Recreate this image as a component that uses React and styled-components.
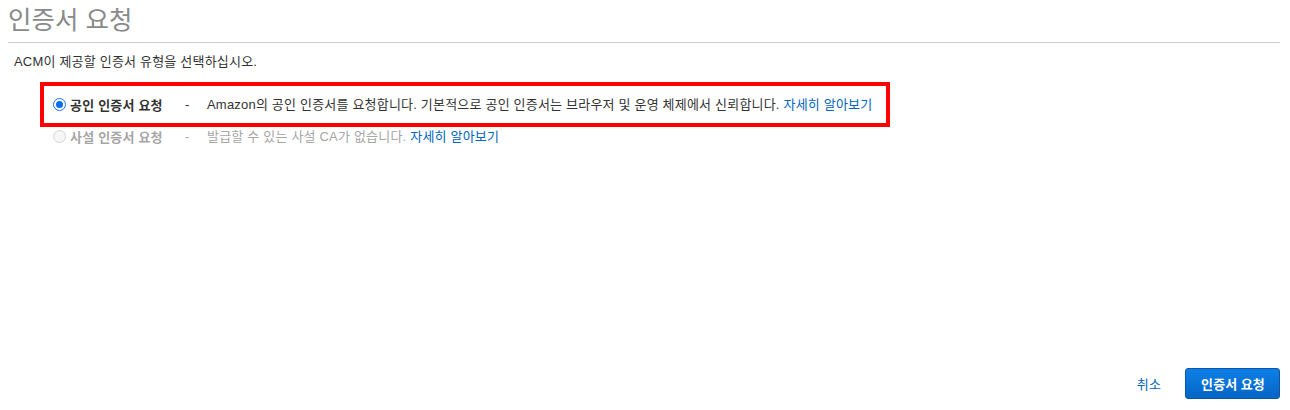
import React, { useState } from "react";
import styled, { createGlobalStyle } from "styled-components";

const GlobalStyle = createGlobalStyle`
  html, body {
    margin: 0;
    padding: 0;
    background: #fff;
  }
  body {
    font-family: "Liberation Sans", "Noto Sans CJK KR", sans-serif;
    color: #333;
  }
`;

const Page = styled.div`
  height: 410px;
  box-sizing: border-box;
  display: flex;
  flex-direction: column;
  padding: 0 10px 11px 8px;
`;

const Title = styled.h1`
  margin: 0;
  padding: 5px 0 6px;
  font-size: 25.5px;
  font-weight: 400;
  line-height: 31px;
  color: #8a8a8a;
  border-bottom: 1px solid #cfcfcf;
`;

const Intro = styled.p`
  margin: 11px 0 0 6px;
  font-size: 13px;
  line-height: 16px;
  letter-spacing: 0.2px;
  color: #333;
`;

const Options = styled.div`
  display: flex;
  flex-direction: column;
  margin: 12px 0 0 32px;
`;

const Row = styled.label`
  display: flex;
  align-items: center;
  align-self: flex-start;
  font-size: 13px;
  letter-spacing: 0.2px;
  padding: ${(p) => (p.$marked ? "9px 14px 9px 9px" : "0 0 0 13px")};
  border: ${(p) => (p.$marked ? "4px solid #ff0000" : "none")};
  color: ${(p) => (p.$disabled ? "#a6a6a6" : "#333")};
  cursor: ${(p) => (p.$disabled ? "default" : "pointer")};
`;

const Radio = styled.span`
  width: 13px;
  height: 13px;
  box-sizing: border-box;
  border-radius: 50%;
  flex: none;
  display: flex;
  align-items: center;
  justify-content: center;
  border: 1px solid ${(p) => (p.$on ? "#1a73e8" : "#d6d6d6")};
  background: ${(p) => (p.$on ? "#fff" : "#f6f6f6")};
  &::after {
    content: "";
    width: 7px;
    height: 7px;
    border-radius: 50%;
    background: ${(p) => (p.$on ? "#0a6cf0" : "transparent")};
  }
`;

const Name = styled.span`
  width: 115px;
  margin-left: 4px;
  font-weight: 700;
`;

const Dash = styled.span`
  width: 22px;
`;

const Desc = styled.span`
  line-height: 18px;
`;

const Link = styled.a`
  color: #0066c0;
  text-decoration: none;
  cursor: pointer;
`;

const Footer = styled.div`
  margin-top: auto;
  display: flex;
  align-items: center;
  justify-content: flex-end;
  gap: 24px;
`;

const Cancel = styled.a`
  font-size: 13px;
  letter-spacing: 0.2px;
  color: #0066c0;
  cursor: pointer;
`;

const Primary = styled.button`
  height: 31px;
  padding: 0 14px 0 15px;
  border: 1px solid #0b55a8;
  border-radius: 3px;
  background: linear-gradient(#0e7fe6, #0566c6);
  color: #fff;
  font-family: "Noto Sans CJK KR", sans-serif;
  font-size: 13px;
  font-weight: 700;
  letter-spacing: 0.2px;
  cursor: pointer;
`;

const options = [
  {
    id: "public",
    name: "공인 인증서 요청",
    desc: "Amazon의 공인 인증서를 요청합니다. 기본적으로 공인 인증서는 브라우저 및 운영 체제에서 신뢰합니다.",
  },
  {
    id: "private",
    name: "사설 인증서 요청",
    desc: "발급할 수 있는 사설 CA가 없습니다.",
    disabled: true,
  },
];

export default function App() {
  const [choice, setChoice] = useState("public");

  return (
    <>
      <GlobalStyle />
      <Page>
        <Title>인증서 요청</Title>
        <Intro>ACM이 제공할 인증서 유형을 선택하십시오.</Intro>
        <Options>
          {options.map((o) => (
            <Row
              key={o.id}
              $marked={o.id === "public"}
              $disabled={o.disabled}
              onClick={() => !o.disabled && setChoice(o.id)}
            >
              <Radio $on={choice === o.id} />
              <Name>{o.name}</Name>
              <Dash>-</Dash>
              <Desc>
                {o.desc} <Link>자세히 알아보기</Link>
              </Desc>
            </Row>
          ))}
        </Options>
        <Footer>
          <Cancel>취소</Cancel>
          <Primary>인증서 요청</Primary>
        </Footer>
      </Page>
    </>
  );
}
